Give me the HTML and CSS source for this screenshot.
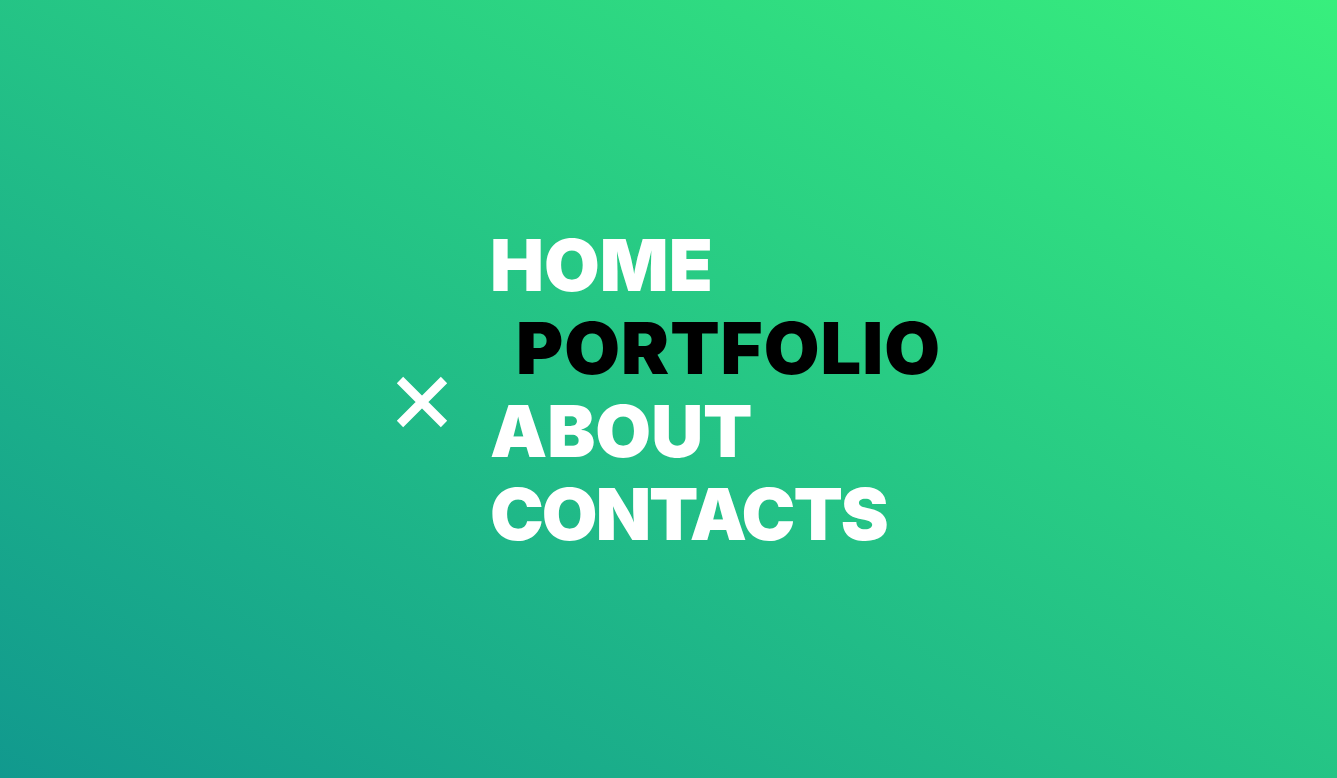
FILE: index.html
```html
<!DOCTYPE html>
<html lang="en">
<head>
<meta charset="utf-8">
<title>Menu</title>
<link rel="stylesheet" href="styles.css">
</head>
<body>
<div class="screen">
  <nav class="menu">
    <button class="close" aria-label="Close menu">
      <svg viewBox="0 0 52 52" width="52" height="52"><path d="M4 4 L48 48 M48 4 L4 48" stroke="#fff" stroke-width="9" fill="none"/></svg>
    </button>
    <ul class="links">
      <li><a class="link" href="#">HOME</a></li>
      <li><a class="link link-active link-wide" href="#">PORTFOLIO</a></li>
      <li><a class="link" href="#">ABOUT</a></li>
      <li><a class="link link-tight" href="#">CONTACTS</a></li>
    </ul>
  </nav>
</div>
</body>
</html>
```
FILE: styles.css
```css
html, body {
  margin: 0;
  padding: 0;
  height: 100%;
}
body {
  font-family: Inter, "Liberation Sans", sans-serif;
}
.screen {
  height: 100vh;
  background: linear-gradient(to top right, #11998e, #38ef7d);
  display: flex;
  align-items: center;
  padding-left: 396px;
  box-sizing: border-box;
}
.menu {
  display: flex;
  align-items: center;
  gap: 42px;
}
.close {
  background: none;
  border: 0;
  padding: 0;
  width: 52px;
  height: 52px;
  display: block;
  margin-top: 26px;
}
.close svg { display: block; }
.links {
  list-style: none;
  margin: 0;
  padding: 0;
}
.link {
  display: block;
  font-size: 72px;
  font-weight: 900;
  line-height: 83px;
  color: #fff;
  text-decoration: none;
  letter-spacing: 0;
}
.link-active {
  color: #000;
  padding-left: 26px;
}
.link-wide { letter-spacing: 1px; }
.link-tight { letter-spacing: -2px; }
```
